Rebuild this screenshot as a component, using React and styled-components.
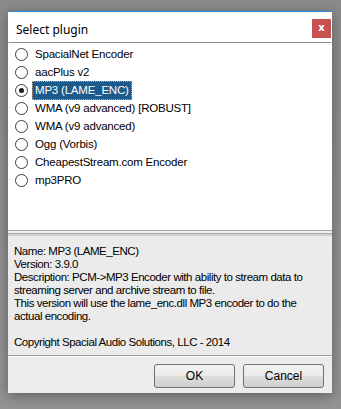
import React, {useState} from 'react';
import styled, {createGlobalStyle} from 'styled-components';

const GlobalStyle = createGlobalStyle`
  html, body {
    margin: 0;
    padding: 0;
    background: #8f8f8f;
  }
  body {
    width: 341px;
    height: 409px;
    overflow: hidden;
    font-family: "Liberation Sans", Arial, sans-serif;
  }
`;

const Screen = styled.div`
  width: 341px;
  height: 409px;
  padding: 11px 0 0 8px;
  box-sizing: border-box;
  background: linear-gradient(180deg, #8a8a8a 0%, #939393 100%);
`;

const Window = styled.div`
  width: 324px;
  height: 382px;
  display: flex;
  flex-direction: column;
  background: #f0f0f0;
  border-top: 1px solid #2b88d8;
  box-sizing: border-box;
  box-shadow: 0 3px 12px rgba(0, 0, 0, 0.35);
`;

const TitleBar = styled.div`
  height: 30px;
  display: flex;
  align-items: flex-start;
  justify-content: space-between;
  background: #fff;
  padding: 0 1px 0 8px;
`;

const Title = styled.div`
  margin-top: 9px;
  font-family: "Noto Sans", "Open Sans", sans-serif;
  font-size: 12px;
  color: #000;
`;

const CloseButton = styled.div`
  margin-top: 7px;
  width: 19px;
  height: 19px;
  background: #c75050;
  color: #fff;
  font-family: "DejaVu Sans", sans-serif;
  font-weight: bold;
  font-size: 10px;
  line-height: 18px;
  text-align: center;
`;

const List = styled.div`
  height: 188px;
  background: #fff;
  border-top: 1px solid #8c8c94;
  border-left: 1px solid #fff;
  border-right: 1px solid #fff;
  padding-top: 2px;
  box-sizing: border-box;
`;

const Row = styled.div`
  height: 18px;
  display: flex;
  align-items: center;
  padding-left: 6px;
  font-size: 11.5px;
  color: #000;
`;

const Radio = styled.span`
  width: 13px;
  height: 13px;
  box-sizing: border-box;
  border: 1px solid #3c3c3c;
  border-radius: 50%;
  background: #fff;
  display: flex;
  align-items: center;
  justify-content: center;
  margin-right: 4px;

  &::after {
    content: '';
    display: ${p => (p.$checked ? 'block' : 'none')};
    width: 5px;
    height: 5px;
    border-radius: 50%;
    background: #1a1a1a;
  }
`;

const Label = styled.span`
  padding: 0 3px 0 3px;
  height: 19px;
  line-height: 19px;
  box-sizing: border-box;
  letter-spacing: -0.2px;
  background: ${p => (p.$selected ? '#1b5a8a' : 'transparent')};
  color: ${p => (p.$selected ? '#fff' : '#000')};
  outline: ${p => (p.$selected ? '1px dotted #e0a060' : 'none')};
  outline-offset: -1px;
`;

const Splitter = styled.div`
  height: 6px;
  background: #f0f0f0;
  border-top: 1px solid #a0a0a0;
  border-bottom: 2px solid #d0d0d0;
  box-sizing: border-box;
  position: relative;

  &::after {
    content: '';
    position: absolute;
    left: 0;
    right: 0;
    top: 2px;
    border-top: 1px solid #a8a8a8;
  }
`;

const Info = styled.div`
  flex: 1;
  background: #ebebeb;
  padding: 9px 6px 0;
  font-size: 11.5px;
  line-height: 13px;
  color: #000;
  letter-spacing: -0.45px;
  white-space: pre-line;
  border-bottom: 1px solid #a0a0a0;
`;

const ButtonBar = styled.div`
  height: 37px;
  display: flex;
  justify-content: flex-end;
  align-items: flex-start;
  gap: 8px;
  padding: 7px 8px 0 0;
  box-sizing: border-box;
  border-top: 1px solid #fff;
  background: #ececec;
`;

const Button = styled.button`
  width: 81px;
  height: 24px;
  border: 1px solid #707070;
  border-radius: 3px;
  background: linear-gradient(180deg, #f2f2f2 0%, #ebebeb 48%, #dddddd 52%, #cfcfcf 100%);
  font-family: "Liberation Sans", Arial, sans-serif;
  font-size: 12px;
  color: #000;
  padding: 0;
`;

const plugins = [
    'SpacialNet Encoder',
    'aacPlus v2',
    'MP3 (LAME_ENC)',
    'WMA (v9 advanced) [ROBUST]',
    'WMA (v9 advanced)',
    'Ogg (Vorbis)',
    'CheapestStream.com Encoder',
    'mp3PRO',
];

const info = `Name: MP3 (LAME_ENC)
Version: 3.9.0
Description: PCM->MP3 Encoder with ability to stream data to
streaming server and archive stream to file.
This version will use the lame_enc.dll MP3 encoder to do the
actual encoding.

Copyright Spacial Audio Solutions, LLC - 2014`;

const App = () => {
    const [selected, setSelected] = useState(2);

    return (
        <Screen>
            <GlobalStyle/>
            <Window>
                <TitleBar>
                    <Title>Select plugin</Title>
                    <CloseButton>x</CloseButton>
                </TitleBar>
                <List>
                    {plugins.map((name, i) => (
                        <Row key={name} onClick={() => setSelected(i)}>
                            <Radio $checked={selected === i}/>
                            <Label $selected={selected === i}>{name}</Label>
                        </Row>
                    ))}
                </List>
                <Splitter/>
                <Info>{info}</Info>
                <ButtonBar>
                    <Button>OK</Button>
                    <Button>Cancel</Button>
                </ButtonBar>
            </Window>
        </Screen>
    );
};

export default App;
